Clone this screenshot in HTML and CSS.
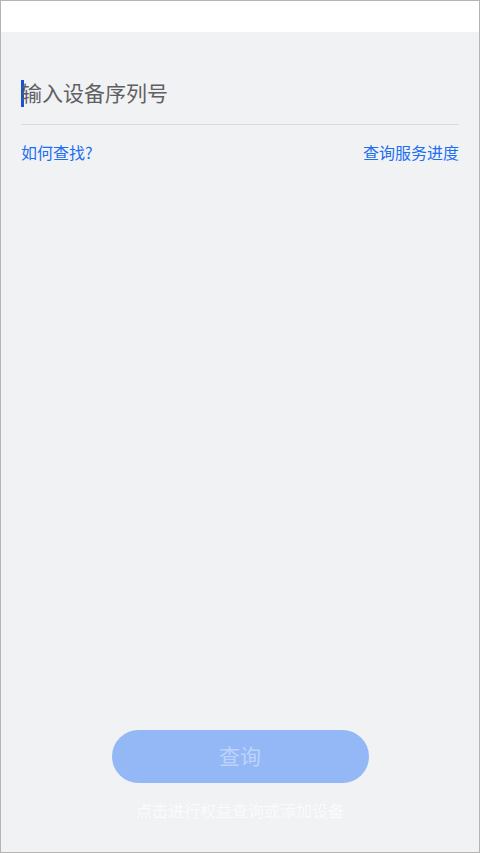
FILE: index.html
```html
<!DOCTYPE html>
<html>
<head>
<meta charset="utf-8">
<link rel="stylesheet" href="styles.css">
</head>
<body>

<div class="screen">
    <div class="status"></div>
    <div class="content">
        <div class="field">
            <span class="caret"></span>
            <span class="placeholder">输入设备序列号</span>
        </div>
        <div class="links">
            <a href="#">如何查找?</a>
            <a href="#">查询服务进度</a>
        </div>
        <div class="bottom">
            <button class="query">查询</button>
            <div class="hint">点击进行权益查询或添加设备</div>
        </div>
    </div>
</div>

</body>
</html>
```

FILE: styles.css
```css
body {
    margin: 0;
    font-family: "Noto Sans CJK SC", "Noto Sans", sans-serif;
}

.screen {
    width: 480px;
    height: 853px;
    box-sizing: border-box;
    border: 1px solid #b4b4b4;
    background-color: #f1f2f4;
    display: flex;
    flex-direction: column;
}

.status {
    height: 31px;
    background-color: #ffffff;
}

.content {
    flex: 1;
    display: flex;
    flex-direction: column;
    padding: 0 20px;
}

.field {
    height: 93px;
    box-sizing: border-box;
    padding-top: 47px;
    border-bottom: 1px solid #d9dadd;
    display: flex;
    align-items: flex-start;
}

.caret {
    width: 3px;
    height: 27px;
    margin-top: 1px;
    background-color: #1a4fe0;
}

.placeholder {
    font-size: 21px;
    line-height: 28px;
    color: #5f6063;
    margin-left: -3px;
    margin-top: -1px;
}

.links {
    display: flex;
    justify-content: space-between;
    padding-top: 15px;
}

.links a {
    font-size: 16px;
    line-height: 24px;
    color: #1c6ef2;
    text-decoration: none;
}

.bottom {
    margin-top: auto;
    display: flex;
    flex-direction: column;
    align-items: center;
    padding-bottom: 30px;
}

.query {
    width: 257px;
    height: 53px;
    padding: 0 0 4px;
    border: none;
    border-radius: 27px;
    background-color: #94b7f6;
    color: #bfd3fa;
    font-family: inherit;
    font-size: 21px;
}

.hint {
    margin-top: 15px;
    font-size: 16px;
    line-height: 24px;
    color: #fafbfc;
}
```
